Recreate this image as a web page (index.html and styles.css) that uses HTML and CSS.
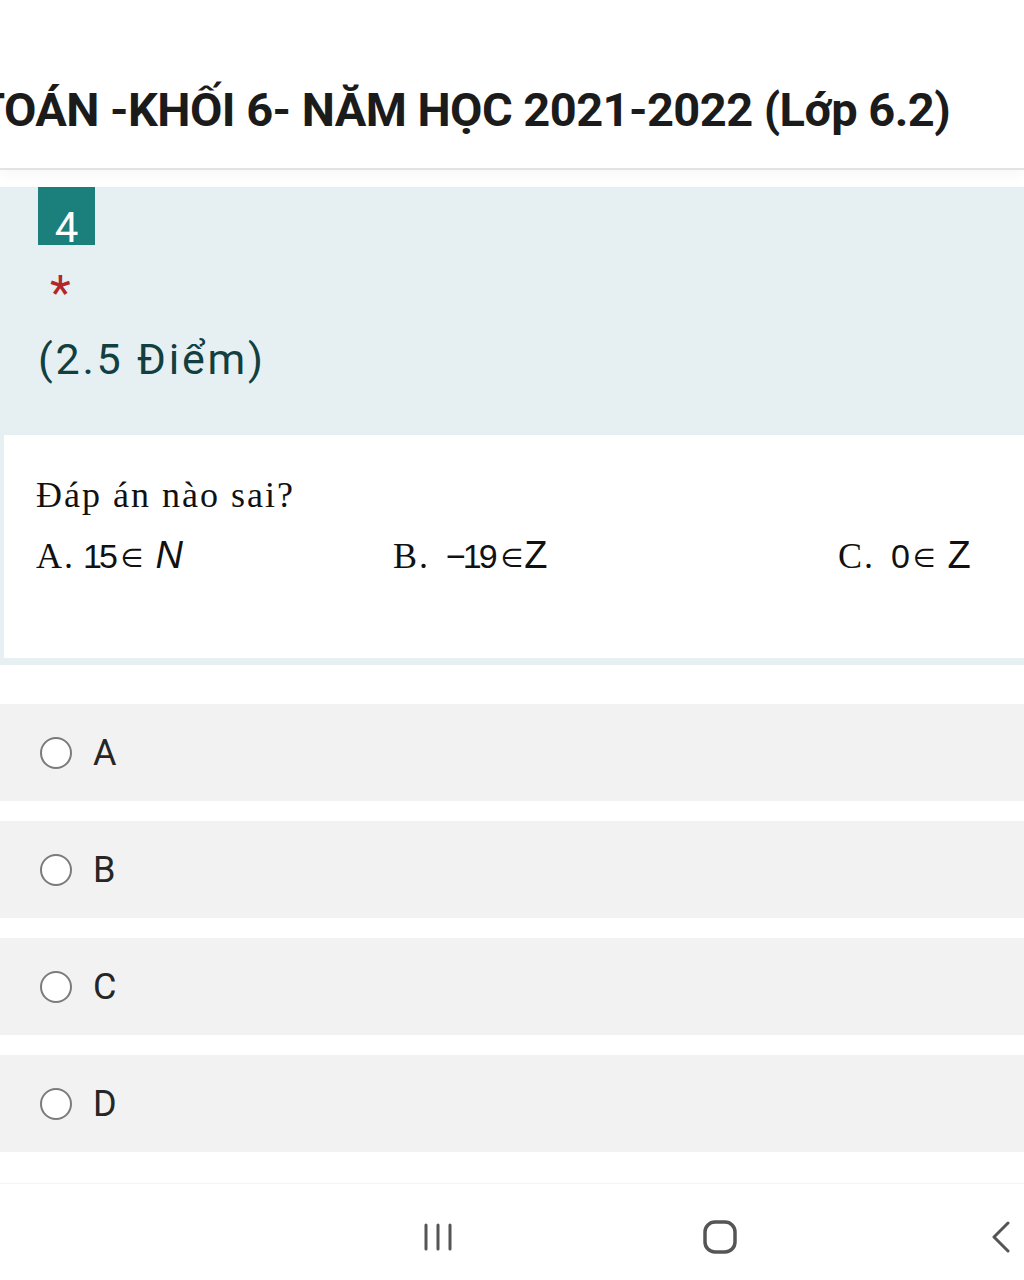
FILE: index.html
```html
<!DOCTYPE html>
<html lang="vi">

<head>
    <meta charset="UTF-8">
    <meta name="viewport" content="width=device-width, initial-scale=1.0">
    <title>Toán - Khối 6</title>
    <link rel="stylesheet" href="styles.css">
</head>

<body>
    <header class="form-header">
        <h1 class="form-title">TOÁN -KHỐI 6- NĂM HỌC 2021-2022 (Lớp 6.2)</h1>
    </header>

    <section class="question">
        <div class="question-head">
            <span class="q-number">4</span>
            <span class="q-required">*</span>
            <div class="q-points">(2.5 Điểm)</div>
        </div>
        <div class="q-image">
            <p class="q-text">Đáp án nào sai?</p>
            <div class="q-choices">
                <span class="choice"><span class="serif">A.</span><span class="num">15</span><span class="in">∈</span><i class="set set-n">N</i></span>
                <span class="choice"><span class="serif">B.</span><span class="num num-wide">−19</span><span class="in">∈</span><span class="set">Z</span></span>
                <span class="choice"><span class="serif">C.</span><span class="num num-wide">0</span><span class="in">∈</span><span class="set set-z">Z</span></span>
            </div>
        </div>
    </section>

    <ul class="options">
        <li class="option"><span class="radio"></span><span class="label">A</span></li>
        <li class="option"><span class="radio"></span><span class="label">B</span></li>
        <li class="option"><span class="radio"></span><span class="label">C</span></li>
        <li class="option"><span class="radio"></span><span class="label">D</span></li>
    </ul>

    <nav class="navbar">
        <svg class="nav-recent" width="30" height="30" viewBox="0 0 30 30">
            <path d="M3 3v24M15 3v24M27 3v24" />
        </svg>
        <svg class="nav-home" width="34" height="34" viewBox="0 0 34 34">
            <rect x="2" y="2" width="30" height="30" rx="10" />
        </svg>
        <svg class="nav-back" width="22" height="32" viewBox="0 0 22 32">
            <path d="M18 2L4 16l14 14" />
        </svg>
    </nav>
</body>

</html>
```

FILE: styles.css
```css
* {
    margin: 0;
    padding: 0;
    box-sizing: border-box;
}

html,
body {
    height: 100%;
}

body {
    overflow: hidden;
    background-color: #fff;
    font-family: Roboto, "Noto Sans", sans-serif;
    color: #222;
}

/* header */
.form-header {
    height: 170px;
    padding-top: 86px;
    border-bottom: 2px solid #e2e4e4;
    box-shadow: 0 4px 14px rgba(0, 0, 0, 0.04);
    overflow: hidden;
}

.form-title {
    margin-left: -24px;
    font-size: 47px;
    line-height: 1;
    font-weight: 700;
    letter-spacing: -0.55px;
    color: #1b1b1b;
    white-space: nowrap;
}

/* question block */
.question {
    margin-top: 17px;
    padding: 0 0 7px 4px;
    background-color: #e6f0f2;
}

.question-head {
    display: flex;
    flex-direction: column;
    align-items: flex-start;
    height: 248px;
    padding-left: 34px;
}

.q-number {
    width: 57px;
    height: 58px;
    padding-top: 20px;
    background-color: #1b7f7b;
    color: #fff;
    font-size: 42px;
    line-height: 42px;
    text-align: center;
}

.q-required {
    margin: 24px 0 0 12px;
    font-size: 48px;
    line-height: 1;
    color: #b3262a;
}

.q-points {
    margin-top: 21px;
    font-size: 43px;
    line-height: 1;
    letter-spacing: 2.8px;
    color: #123f40;
}

.q-image {
    height: 223px;
    padding: 42px 0 0 32px;
    background-color: #fff;
    color: #111;
}

.q-text {
    font-family: "Liberation Serif", serif;
    font-size: 36px;
    line-height: 1;
    letter-spacing: 2px;
}

.q-choices {
    display: grid;
    grid-template-columns: 357px 445px auto;
    margin-top: 23px;
    font-size: 36px;
    line-height: 1;
}

.serif {
    font-family: "Liberation Serif", serif;
    letter-spacing: 2px;
}

.num,
.set {
    font-family: "Liberation Sans", sans-serif;
    font-style: normal;
}

.num {
    margin-left: 8px;
    font-size: 34px;
    letter-spacing: -3px;
}

.num-wide {
    margin-left: 16px;
}

.set {
    font-size: 38px;
}

i.set {
    font-style: italic;
}

.set-n {
    margin-left: 11px;
}

.set-z {
    margin-left: 11px;
}

.in {
    margin: 0 1px 0 6px;
    font-family: "DejaVu Sans", sans-serif;
    font-size: 26px;
    vertical-align: 1px;
}

/* answers */
.options {
    list-style: none;
    margin-top: 39px;
}

.option {
    display: flex;
    align-items: center;
    height: 97px;
    margin-bottom: 20px;
    padding-left: 40px;
    background-color: #f2f2f2;
}

.radio {
    width: 32px;
    height: 32px;
    border: 2px solid #7b7b7b;
    border-radius: 50%;
    background-color: #fff;
}

.label {
    margin-left: 21px;
    font-size: 36px;
    line-height: 1;
    color: #262626;
}

/* system nav */
.navbar {
    display: flex;
    align-items: center;
    height: 106px;
    margin-top: 31px;
    padding-left: 423px;
    border-top: 1px solid #f1f5f5;
}

.navbar svg {
    fill: none;
    stroke: #555;
    stroke-linecap: round;
    stroke-linejoin: round;
}

.nav-recent {
    stroke-width: 3;
}

.nav-home {
    margin-left: 250px;
    stroke-width: 3.5;
}

.nav-back {
    margin-left: 253px;
    stroke-width: 3;
}
```
